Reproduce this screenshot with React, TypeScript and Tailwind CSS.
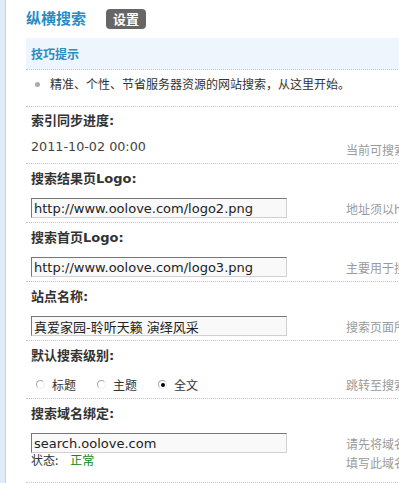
import type { ReactNode } from "react";

const latin = "font-['DejaVu_Sans','Noto_Sans_CJK_SC',sans-serif]";
const cjk = "font-['Noto_Sans_CJK_SC',sans-serif]";
const dotted = "border-b border-dotted border-[#c6c6c6]";

function Label({ children }: { children: ReactNode }) {
  return (
    <div className={`h-[30px] flex items-center pl-[5px] text-[13px] font-bold text-[#333] ${latin}`}>
      {children}
    </div>
  );
}

function Field({ value }: { value: string }) {
  return (
    <input
      readOnly
      value={value}
      className={`block w-[256px] h-[20px] border border-t-[#777] border-l-[#777] border-r-[#d0d0d0] border-b-[#d0d0d0] bg-[#f9f9f9] px-[2px] text-[13px] text-[#222] outline-none ${latin}`}
    />
  );
}

function Hint({ children }: { children: ReactNode }) {
  return <div className={`whitespace-nowrap text-[12px] leading-[19px] text-[#9a9a9a] ${cjk}`}>{children}</div>;
}

function InputGroup({ label, value, hint }: { label: string; value: string; hint: string }) {
  return (
    <div className={dotted}>
      <Label>{label}</Label>
      <div className="grid grid-cols-[315px_auto] items-center pl-[5px] pt-[4px] pb-[4px]">
        <Field value={value} />
        <Hint>{hint}</Hint>
      </div>
    </div>
  );
}

function Radio({ label, checked }: { label: string; checked?: boolean }) {
  return (
    <span className="flex items-center gap-[7px]">
      <span className="w-[9px] h-[9px] rounded-full border border-t-[#a8a8a8] border-l-[#a8a8a8] border-r-[#eee] border-b-[#eee] bg-white flex items-center justify-center">
        {checked && <span className="w-[4px] h-[4px] rounded-full bg-black" />}
      </span>
      <span className={`text-[12px] text-[#333] ${cjk}`}>{label}</span>
    </span>
  );
}

export default function App() {
  return (
    <div className="w-[399px] h-[483px] overflow-hidden bg-white flex">
      <div className="w-[6px] shrink-0 bg-[#dfebf7] border-r border-[#bfd5ec]" />
      <div className="w-[640px] shrink-0 pl-[20px]">
        <div className="h-[38px] flex items-center pb-[1px]">
          <span className={`text-[15px] font-bold text-[#2a8cc4] ${cjk}`}>纵横搜索</span>
          <span
            className={`ml-[20px] w-[40px] h-[20px] rounded-[4px] bg-[#666] text-white text-[13px] font-bold flex items-center justify-center ${cjk}`}
          >
            设置
          </span>
        </div>

        <div className={`h-[32px] bg-[#eef5fc] flex items-center pl-[5px] pt-[1px] ${dotted}`}>
          <span className={`text-[12px] font-bold text-[#2a8cc4] ${cjk}`}>技巧提示</span>
        </div>

        <div className={`h-[37px] flex items-start pt-[7px] pl-[9px] ${dotted}`}>
          <span className="w-[5px] h-[5px] mt-[5px] rounded-full bg-[#aaa]" />
          <span className={`ml-[10px] text-[12px] leading-[14px] text-[#333] ${cjk}`}>
            精准、个性、节省服务器资源的网站搜索，从这里开始。
          </span>
        </div>

        <div className={dotted}>
          <div className={`h-[27px] flex items-center pl-[5px] text-[13px] font-bold text-[#333] ${latin}`}>
            索引同步进度:
          </div>
          <div className="h-[29px] grid grid-cols-[315px_auto] items-start pl-[5px]">
            <span className={`pt-[5px] text-[12.75px] leading-[15px] text-[#444] ${latin}`}>2011-10-02 00:00</span>
            <div className="pt-[6px]">
              <Hint>当前可搜索的数据更新时间</Hint>
            </div>
          </div>
        </div>

        <InputGroup label="搜索结果页Logo:" value="http://www.oolove.com/logo2.png" hint="地址须以http://开头" />
        <InputGroup label="搜索首页Logo:" value="http://www.oolove.com/logo3.png" hint="主要用于搜索首页显示" />
        <InputGroup label="站点名称:" value="真爱家园-聆听天籁 演绎风采" hint="搜索页面所显示的站点名称" />

        <div className={dotted}>
          <Label>默认搜索级别:</Label>
          <div className="h-[27px] grid grid-cols-[315px_auto] items-center pl-[5px]">
            <div className="flex items-center gap-[21px] pl-[5px]">
              <Radio label="标题" />
              <Radio label="主题" />
              <Radio label="全文" checked />
            </div>
            <Hint>跳转至搜索页面时的默认级别</Hint>
          </div>
        </div>

        <div className={dotted}>
          <Label>搜索域名绑定:</Label>
          <div className="grid grid-cols-[315px_auto] items-start pl-[5px] pt-[4px] pb-[10px]">
            <div>
              <Field value="search.oolove.com" />
              <div className={`text-[12px] leading-[14px] text-[#333] ${cjk}`}>
                状态:<span className="ml-[12px] text-[#118811]">正常</span>
              </div>
            </div>
            <div className="pt-[1px]">
              <Hint>请先将域名解析至服务器</Hint>
              <Hint>填写此域名后即可访问</Hint>
            </div>
          </div>
        </div>
      </div>
    </div>
  );
}
